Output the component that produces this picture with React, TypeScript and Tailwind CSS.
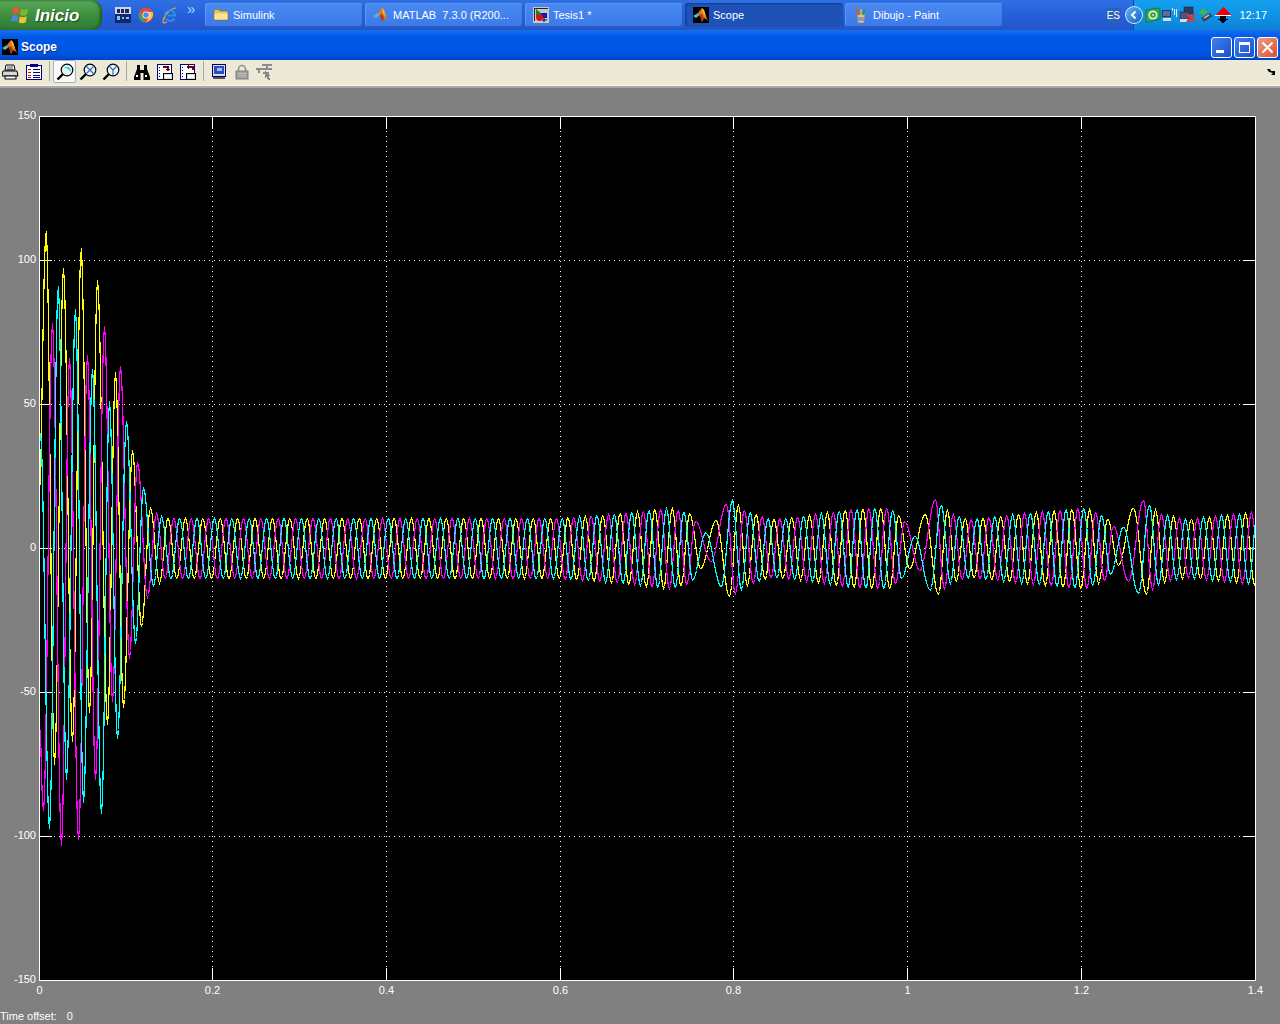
import React from "react";

type Pt = [number, number];

const lerpTable = (table: Pt[], x: number) => {
  if (x <= table[0][0]) return table[0][1];
  for (let i = 1; i < table.length; i++) {
    if (x <= table[i][0]) {
      const [a, b] = [table[i - 1], table[i]];
      return a[1] + ((b[1] - a[1]) * (x - a[0])) / (b[0] - a[0]);
    }
  }
  return table[table.length - 1][1];
};

const ENV: Pt[] = [
  [150, 11], [165, 10.5], [560, 10.5], [620, 12], [670, 14], [690, 12], [700, 7], [710, 4], [718, 12], [730, 17],
  [745, 13], [770, 10], [800, 11], [850, 13.5], [890, 14], [905, 9], [915, 4], [925, 12], [935, 17], [950, 12],
  [970, 10], [1020, 12], [1085, 14], [1105, 11], [1120, 5], [1130, 13], [1142, 17], [1160, 12], [1185, 10], [1255, 12.5],
];

const PHASE: Pt[] = [
  [156, 0], [695, 31], [726, 32], [904, 42], [935, 43], [1113, 53], [1143, 54], [1251, 60], [1300, 62.7],
];

const invPhase = (p: number) => {
  for (let i = 1; i < PHASE.length; i++) {
    if (p <= PHASE[i][1]) {
      const [a, b] = [PHASE[i - 1], PHASE[i]];
      return a[0] + ((b[0] - a[0]) * (p - a[1])) / (b[1] - a[1]);
    }
  }
  return 1300;
};

const buildExtremes = (start: Pt[], offset: number): Pt[] => {
  const out: Pt[] = [...start];
  const lastX = start[start.length - 1][0];
  const lastPositive = start[start.length - 1][1] > 0;
  let k = Math.ceil(((lastX - 156) / 17.4 + offset) * 2) / 2 - 1;
  let wantPositive = !lastPositive;
  for (; k < 66; k += 0.5) {
    const isPeak = Number.isInteger(k);
    if (isPeak !== wantPositive) continue;
    const x = invPhase(k - offset);
    if (x <= out[out.length - 1][0] + 4) continue;
    if (x > 1290) break;
    const a = lerpTable(ENV, x);
    out.push([x, isPeak ? a : -a]);
    wantPositive = !wantPositive;
  }
  return out;
};

const YELLOW_START: Pt[] = [
  [37, -10], [45.7, 110], [54, -75], [63, 97], [72, -67], [80.7, 104], [89, -57], [97, 93], [107, -61], [115, 61],
  [123, -55], [132, 34], [141, -27], [150, 14], [159, -12],
];
const MAGENTA_START: Pt[] = [
  [34, 20], [43, -91], [52, 78], [61, -103], [69, 66], [78, -101], [87, 67], [95, -80], [104, 77], [112, -53],
  [120, 63], [129, -38], [137, 30], [147, -17], [156, 12],
];
const CYAN_START: Pt[] = [
  [40, 40], [49, -97], [57.7, 91], [66, -80], [75, 83], [83, -88], [92, 62], [101, -92], [109, 51], [117, -66],
  [126, 44], [135, -33], [143, 21], [153, -13], [161, 11],
];

const Y0 = 548;
const SCALE = 2.883;

const valueAt = (ext: Pt[], x: number) => {
  let lo = 0;
  let hi = ext.length - 1;
  while (hi - lo > 1) {
    const m = (lo + hi) >> 1;
    if (x > ext[m][0]) lo = m;
    else hi = m;
  }
  const [a, b] = [ext[lo], ext[hi]];
  const t = Math.min(1, Math.max(0, (x - a[0]) / (b[0] - a[0])));
  return a[1] + ((b[1] - a[1]) * (1 - Math.cos(Math.PI * t))) / 2;
};

const tracePoints = (ext: Pt[]) => {
  const pts: string[] = [];
  for (let x = 40; x <= 1255; x += 1) {
    const near = ext.find((e) => Math.abs(e[0] - x) <= 0.5);
    const sx = near ? near[0] : x;
    pts.push(`${x}.5,${Math.round(Y0 - valueAt(ext, sx) * SCALE)}.5`);
  }
  return pts.join(" ");
};

const YELLOW = tracePoints(buildExtremes(YELLOW_START, 1 / 3));
const MAGENTA = tracePoints(buildExtremes(MAGENTA_START, 0));
const CYAN = tracePoints(buildExtremes(CYAN_START, -1 / 3));

const XTICKS: [number, string][] = [
  [39.5, "0"], [212.5, "0.2"], [386.5, "0.4"], [560.5, "0.6"], [733.5, "0.8"], [907.5, "1"], [1081.5, "1.2"], [1255.5, "1.4"],
];
const YTICKS: [number, string][] = [
  [116.5, "150"], [260.5, "100"], [404.5, "50"], [548.5, "0"], [692.5, "-50"], [836.5, "-100"], [980.5, "-150"],
];

function MatlabLogo({ s = 16 }: { s?: number }) {
  return (
    <svg width={s} height={s} viewBox="0 0 16 16" className="shrink-0">
      <path d="M0 9 5 6 7 8 3 11Z" fill="#5ab4c4" />
      <path d="M5 6 9 1 11 3 14 12 16 14 11 11 9 15 7 8Z" fill="#e8761a" />
      <path d="M9 1 11 3 13 10 10 6Z" fill="#f6b73c" />
      <path d="M7 8 9 15 11 11 9 7Z" fill="#b23a10" />
    </svg>
  );
}

function MatlabBlack() {
  return (
    <span className="inline-flex bg-black shrink-0">
      <MatlabLogo s={16} />
    </span>
  );
}

function FolderIcon() {
  return (
    <svg width={16} height={16} viewBox="0 0 16 16" className="shrink-0">
      <path d="M1 4 2 2.5H6L7 4H14L15 5V13H1Z" fill="#e9c25c" stroke="#8d6f2a" strokeWidth="0.7" />
      <path d="M1.5 6.5H14.5V12.5H1.5Z" fill="#fbe595" />
    </svg>
  );
}

function TesisIcon() {
  return (
    <svg width={16} height={16} viewBox="0 0 16 16" className="shrink-0">
      <rect x="0" y="0" width="16" height="16" fill="#c8c8c8" />
      <rect x="1" y="1" width="14" height="1" fill="#222" />
      <rect x="1" y="1" width="1" height="13" fill="#222" />
      <path d="M3 2 9 7 3 10Z" fill="#0a8a2a" />
      <rect x="8" y="6" width="6" height="5" fill="#1414c8" />
      <circle cx="6.5" cy="10.5" r="3.4" fill="#e01010" />
      <path d="M11 11V15M9 13H14" stroke="#111" strokeWidth="1" />
    </svg>
  );
}

function PaintIcon() {
  return (
    <svg width={16} height={18} viewBox="0 0 16 18" className="shrink-0">
      <path d="M4 8H12L11 17H5Z" fill="#c9c6b6" stroke="#7a7a68" strokeWidth="0.6" />
      <path d="M6 9 3 2" stroke="#d3611b" strokeWidth="2" />
      <path d="M8 9V3" stroke="#e7b632" strokeWidth="1.6" />
      <path d="M10 9 12 3" stroke="#2d9b3e" strokeWidth="1.6" />
      <path d="M6 11V15M8 11V15" stroke="#3a6fd0" strokeWidth="1" />
      <path d="M10 11V15" stroke="#d8453a" strokeWidth="1" />
    </svg>
  );
}

function WinFlag() {
  return (
    <svg width={20} height={20} viewBox="0 0 20 20" className="shrink-0">
      <path d="M3 3.5C5.5 2 7 2.5 9.5 3.5L8.5 9.5C6 8.5 4.5 8 2 9.5Z" fill="#e8562a" />
      <path d="M11 4C13 5 15 5 18 3.8L17 9.8C14 11 12.5 11 10 10Z" fill="#7ab92e" />
      <path d="M2 11C4.5 9.6 6 10 8.2 11L7.2 17C5 16 3.5 15.6 1 17Z" fill="#4d86d8" />
      <path d="M9.7 11.5C12 12.5 14 12.5 16.7 11.3L15.8 17.3C13 18.5 11 18.3 8.8 17.4Z" fill="#f2c230" />
    </svg>
  );
}

function DevIcon() {
  return (
    <svg width={16} height={16} viewBox="0 0 16 16" shapeRendering="crispEdges" className="shrink-0">
      <rect width="16" height="16" fill="#0d2a6b" />
      <rect x="0" y="0" width="16" height="7" fill="#cfd6e6" />
      <rect x="2" y="2" width="3" height="4" fill="#1b2a55" />
      <rect x="6" y="2" width="3" height="4" fill="#1b2a55" />
      <rect x="10" y="2" width="4" height="4" fill="#1b2a55" />
      <rect x="2" y="9" width="3" height="4" fill="#8fc0f0" />
      <rect x="7" y="10" width="2" height="2" fill="#8fc0f0" />
      <rect x="11" y="10" width="3" height="2" fill="#8fc0f0" />
    </svg>
  );
}

function ChromeIcon() {
  return (
    <svg width={16} height={16} viewBox="0 0 16 16" className="shrink-0">
      <circle cx="8" cy="8" r="7.5" fill="#dd4b3b" />
      <path d="M1.5 4.5 5 11 8 15.5C3 15.5 .5 11.5 .5 8 .5 6.5 1 5.5 1.5 4.5Z" fill="#3aa757" />
      <path d="M8 5H14.7C15.5 8 15 12.5 8 15.5L11 10Z" fill="#fcc934" />
      <circle cx="8" cy="8" r="3.6" fill="#fff" />
      <circle cx="8" cy="8" r="2.8" fill="#4a8af4" />
    </svg>
  );
}

function IEIcon() {
  return (
    <svg width={17} height={17} viewBox="0 0 17 17" className="shrink-0">
      <path d="M15 1C11 1 4 6 2 14 1.5 16 3 16.5 6 15" fill="none" stroke="#e8a72c" strokeWidth="1.2" />
      <path d="M4 8.5A5 5 0 0 1 14 8.5H7M13.5 11.5A5 5 0 0 1 5 11.5" fill="none" stroke="#2f8fe8" strokeWidth="2.2" />
    </svg>
  );
}

function TaskButton({ icon, label, active }: { icon: React.ReactNode; label: string; active?: boolean }) {
  return (
    <div
      className={`w-[158px] h-[24px] flex items-center gap-[3px] rounded-[3px] pl-[8px] text-[11px] text-white whitespace-pre overflow-hidden shrink-0 ${
        active
          ? "bg-[#1e52b7] shadow-[inset_1px_1px_2px_#123c8e]"
          : "bg-gradient-to-b from-[#4a8af2] to-[#3a79e8] shadow-[inset_-1px_-1px_1px_#2a5bc4,inset_1px_1px_1px_#5d97f4]"
      }`}
    >
      {icon}
      <span className="ml-[1px]">{label}</span>
    </div>
  );
}

function TrayIcons() {
  return (
    <div className="flex items-center gap-[1px]">
      <svg width={16} height={16} viewBox="0 0 16 16">
        <path d="M1 3 13 1 15 2V12L3 15H1Z" fill="#2fa84a" stroke="#0d6b2c" strokeWidth="0.7" />
        <circle cx="8" cy="8" r="4.6" fill="#d8f0c8" />
        <circle cx="8" cy="8" r="2.8" fill="#3d9b46" />
        <circle cx="8" cy="8" r="1" fill="#cfe8b8" />
      </svg>
      <svg width={16} height={16} viewBox="0 0 16 16" shapeRendering="crispEdges">
        <rect x="0" y="3" width="9" height="7" fill="#2b3a66" />
        <rect x="1" y="4" width="7" height="5" fill="#5a6f9e" />
        <rect x="1" y="11" width="8" height="3" fill="#d6dce8" />
        <rect x="10" y="1" width="1" height="3" fill="#e6ecf6" />
        <rect x="12" y="2" width="1" height="6" fill="#e6ecf6" />
        <rect x="14" y="2" width="1" height="8" fill="#e6ecf6" />
      </svg>
      <svg width={18} height={18} viewBox="0 0 18 18">
        <rect x="5" y="1" width="9" height="7" fill="#2e3c63" stroke="#1c2645" strokeWidth="0.6" />
        <rect x="1" y="6" width="9" height="7" fill="#47577f" stroke="#1c2645" strokeWidth="0.6" />
        <rect x="1" y="13" width="8" height="3" fill="#d9dde6" />
        <path d="M8 8 16 16M16 8 8 16" stroke="#e5322b" strokeWidth="2.4" />
      </svg>
      <svg width={16} height={16} viewBox="0 0 16 16">
        <path d="M1 5 6 1V3.5H9V6.5H6V9Z" fill="#4fb82c" />
        <path d="M3 11 12 6 15 9 6 15Z" fill="#3f4a52" />
        <path d="M6 11 11 8" stroke="#c8ced4" strokeWidth="1.4" />
      </svg>
      <svg width={16} height={16} viewBox="0 0 16 16" shapeRendering="crispEdges">
        <path d="M8 0 16 8H0Z" fill="#f00000" />
        <rect x="0" y="8" width="16" height="1" fill="#fff" />
        <path d="M5 9H11V12H13.5L8 16 2.5 12H5Z" fill="#000" />
      </svg>
    </div>
  );
}

function Printer() {
  return (
    <svg width={17} height={16} viewBox="0 0 17 16">
      <path d="M4 1H12L13 6H3Z" fill="#fff" stroke="#000" />
      <path d="M1 7H15L16 12H0Z" fill="#d8d8d8" stroke="#000" />
      <rect x="3" y="12" width="11" height="3" fill="#fff" stroke="#000" />
      <path d="M5 3H11M5 5H11" stroke="#000" strokeWidth="0.7" />
    </svg>
  );
}

function ParamsIcon() {
  return (
    <svg width={16} height={16} viewBox="0 0 16 16" shapeRendering="crispEdges">
      <rect x="0.5" y="1.5" width="15" height="14" fill="#fff" stroke="#000080" />
      <rect x="4" y="0" width="8" height="3" fill="#000080" />
      <path d="M2 5H5M2 8H5M2 11H5M2 13.5H5" stroke="#c01010" />
      <path d="M7 5H14M7 8H14M7 11H14M7 13.5H14" stroke="#000080" />
    </svg>
  );
}

function Magnifier({ kind }: { kind: "plain" | "x" | "y" }) {
  return (
    <svg width={18} height={18} viewBox="0 0 18 18">
      <circle cx="11" cy="7" r="5.8" fill="#eaf6f8" stroke="#000" strokeWidth="1.2" />
      {kind === "plain" && <path d="M8 5A4 4 0 0 1 14 5 4 4 0 0 1 15 9C12 6 10 5 8 5Z" fill="#3fd9e6" />}
      {kind === "x" && <path d="M7.5 3.5 14.5 10.5M14.5 3.5 7.5 10.5" stroke="#2a62c8" strokeWidth="1.1" />}
      {kind === "y" && <path d="M7.5 3.5 11 7 14.5 3.5M11 7V12" stroke="#2a62c8" strokeWidth="1.1" fill="none" />}
      <path d="M7 11 1.5 16.5" stroke="#000" strokeWidth="2.4" />
    </svg>
  );
}

function Binoculars() {
  return (
    <svg width={16} height={16} viewBox="0 0 16 16">
      <path d="M3 1H6V6H10V1H13V5L16 13V16H9.5V9H6.5V16H0V13L3 5Z" fill="#000" />
      <rect x="2" y="11" width="2" height="2" fill="#fff" />
      <rect x="11" y="11" width="2" height="2" fill="#fff" />
    </svg>
  );
}

function SaveAxes({ back }: { back?: boolean }) {
  return (
    <svg width={16} height={16} viewBox="0 0 16 16" shapeRendering="crispEdges">
      <rect x="0.5" y="0.5" width="14" height="15" fill="#fff" stroke="#000080" />
      <path d="M2 3H3M2 6H3M2 9H3M2 12H3" stroke="#000080" />
      <path d={back ? "M13 6V3H7M9 1 7 3 9 5" : "M6 3H11V7M9 5 11 7 13 5"} stroke="#800000" strokeWidth="1.2" fill="none" />
      <rect x="6.5" y="9.5" width="9" height="6" fill="#d8d8d8" stroke="#000" />
      <rect x="8" y="11" width="6" height="3" fill="#fff" />
    </svg>
  );
}

function ScopeProps() {
  return (
    <svg width={14} height={16} viewBox="0 0 14 16" shapeRendering="crispEdges">
      <rect x="0.5" y="0.5" width="13" height="12" fill="#d8dce8" stroke="#000060" />
      <rect x="2" y="2" width="10" height="8" fill="#2b4fc0" />
      <rect x="5" y="4" width="5" height="3" fill="#a8bce8" />
      <rect x="1" y="13" width="12" height="2" fill="#555" />
    </svg>
  );
}

function LockIcon() {
  return (
    <svg width={14} height={16} viewBox="0 0 14 16">
      <path d="M3.5 8V5A3.5 3.5 0 0 1 10.5 5V8" fill="none" stroke="#909090" strokeWidth="1.6" />
      <rect x="1" y="7" width="12" height="8" fill="#a0a0a0" stroke="#808080" />
      <path d="M3 9.5H11M3 12H11" stroke="#c4c4c4" />
    </svg>
  );
}

function SelectIcon() {
  return (
    <svg width={17} height={16} viewBox="0 0 17 16" shapeRendering="crispEdges">
      <path d="M0 5H9M3 5V9M6 1H16M11 1V5M9 5H16M7 9H13" stroke="#8c8c8c" strokeWidth="1.6" />
      <path d="M9 7 15 12H12.5L14 15.5H12L10.5 13 9 15Z" fill="#888" />
    </svg>
  );
}

function ToolBtn({ children, active }: { children: React.ReactNode; active?: boolean }) {
  return (
    <div
      className={`w-[23px] h-[23px] flex items-center justify-center shrink-0 rounded-[2px] ${
        active ? "bg-[#fbfaf6] border border-[#9db3cc]" : ""
      }`}
    >
      {children}
    </div>
  );
}

function Sep() {
  return (
    <div className="w-[8px] h-[23px] flex justify-center shrink-0">
      <div className="w-[1px] h-[20px] mt-[1px] bg-[#aca899]" />
    </div>
  );
}

function WinBtn({ children, red }: { children: React.ReactNode; red?: boolean }) {
  return (
    <div
      className={`w-[21px] h-[21px] rounded-[3px] border border-white flex items-center justify-center ${
        red
          ? "bg-gradient-to-br from-[#f09a82] to-[#d8502e]"
          : "bg-gradient-to-br from-[#3f80f0] to-[#1c50cc]"
      }`}
    >
      {children}
    </div>
  );
}

export default function App() {
  return (
    <div
      className="w-[1280px] h-[1024px] overflow-hidden flex flex-col bg-[#808080]"
      style={{ fontFamily: '"Liberation Sans", Arial, sans-serif' }}
    >
      {/* taskbar */}
      <div className="h-[30px] shrink-0 flex items-center bg-gradient-to-b from-[#2f6fe4] via-[#2560dc] to-[#2455c8] relative">
        <div className="w-[102px] h-[30px] shrink-0 flex items-center pl-[10px] gap-[5px] rounded-r-[10px] bg-gradient-to-b from-[#5aa85a] via-[#3d8f3d] to-[#2f7a34] shadow-[inset_-2px_0_3px_#1d5a20]">
          <WinFlag />
          <span className="text-[17px] italic font-bold text-white leading-none [text-shadow:1px_1px_1px_#1a4a1a]">
            Inicio
          </span>
        </div>
        <div className="w-[103px] shrink-0 h-full flex items-center pl-[13px] gap-[7px] relative">
          <DevIcon />
          <ChromeIcon />
          <IEIcon />
          <span className="text-[15px] leading-none text-[#b9d2f8] self-start mt-[1px] ml-[2px]">»</span>
        </div>
        <div className="flex gap-[2px] items-center">
          <TaskButton icon={<FolderIcon />} label="Simulink" />
          <TaskButton icon={<MatlabLogo />} label="MATLAB  7.3.0 (R200..." />
          <TaskButton icon={<TesisIcon />} label="Tesis1 *" />
          <TaskButton icon={<MatlabBlack />} label="Scope" active />
          <TaskButton icon={<PaintIcon />} label="Dibujo - Paint" />
        </div>
        <div className="flex-1" />
        <span className="text-[10px] text-white bg-[#2a62b8] px-[1px] h-[15px] leading-[15px] mr-[12px]">ES</span>
        <div className="w-[147px] h-[30px] shrink-0 flex items-center bg-gradient-to-b from-[#14a0ee] via-[#0f94e6] to-[#0c82d8] border-l border-[#0a4aa0] relative pl-[9px]">
          <div className="absolute left-[-9px] top-[6px] w-[18px] h-[18px] rounded-full bg-gradient-to-br from-[#58b6f2] to-[#1260c8] border border-white/80 flex items-center justify-center">
            <svg width={10} height={10} viewBox="0 0 10 10">
              <path d="M6.5 1.5 3 5 6.5 8.5" fill="none" stroke="#fff" strokeWidth="2" />
            </svg>
          </div>
          <div className="ml-[2px]">
            <TrayIcons />
          </div>
          <span className="text-[11px] text-white ml-auto mr-[13px]">12:17</span>
        </div>
      </div>

      {/* title bar */}
      <div className="h-[30px] shrink-0 flex items-center pt-[4px] bg-[linear-gradient(180deg,#1a6fe8_0%,#0a66f0_10%,#0058e8_25%,#0056e4_75%,#0048cc_95%,#0040b8_100%)] pl-[2px] pr-[2px]">
        <MatlabBlack />
        <span className="text-[12px] font-bold text-white ml-[3px] [text-shadow:1px_1px_0_#0a2f90]">Scope</span>
        <div className="ml-auto flex gap-[2px]">
          <WinBtn>
            <div className="w-[8px] h-[3px] bg-white mt-[8px] mr-[4px]" />
          </WinBtn>
          <WinBtn>
            <div className="w-[11px] h-[11px] border border-white border-t-[3px]" />
          </WinBtn>
          <WinBtn red>
            <svg width={13} height={13} viewBox="0 0 13 13">
              <path d="M1.5 1.5 11.5 11.5M11.5 1.5 1.5 11.5" stroke="#fff" strokeWidth="2" />
            </svg>
          </WinBtn>
        </div>
      </div>

      {/* toolbar */}
      <div className="h-[25px] shrink-0 flex items-start bg-[#ece9d8] border-b border-[#f6f4ea] box-content -ml-[1px]">
        <ToolBtn><Printer /></ToolBtn>
        <ToolBtn><ParamsIcon /></ToolBtn>
        <Sep />
        <ToolBtn active><Magnifier kind="plain" /></ToolBtn>
        <ToolBtn><Magnifier kind="x" /></ToolBtn>
        <ToolBtn><Magnifier kind="y" /></ToolBtn>
        <Sep />
        <ToolBtn><Binoculars /></ToolBtn>
        <ToolBtn><SaveAxes /></ToolBtn>
        <ToolBtn><SaveAxes back /></ToolBtn>
        <Sep />
        <ToolBtn><ScopeProps /></ToolBtn>
        <ToolBtn><LockIcon /></ToolBtn>
        <ToolBtn><SelectIcon /></ToolBtn>
        <svg width={9} height={8} viewBox="0 0 9 8" className="ml-auto mr-[4px] mt-[8px]">
          <path d="M0 1 3 1 4 3 8 3 8 7 4 7 6 5 2 4Z" fill="#000" />
        </svg>
      </div>
      <div className="h-[2px] shrink-0 bg-[#a8a8a8]" />

      {/* plot */}
      <svg
        width={1280}
        height={918}
        viewBox="0 88 1280 918"
        className="block shrink-0"
        style={{ fontFamily: '"Liberation Sans", Arial, sans-serif', fontSize: 11 }}
      >
        <rect x="39.5" y="116.5" width="1216" height="864" fill="#000" />
        {XTICKS.slice(1, -1).map(([x]) => (
          <path key={x} d={`M${x} 116V980`} stroke="#fff" strokeDasharray="1 4" shapeRendering="crispEdges" />
        ))}
        {YTICKS.slice(1, -1).map(([y]) => (
          <path key={y} d={`M39 ${y}H1255`} stroke="#fff" strokeDasharray="1 4" shapeRendering="crispEdges" />
        ))}
        {XTICKS.slice(1, -1).map(([x]) => (
          <path key={`t${x}`} d={`M${x} 117V129M${x} 968V980`} stroke="#fff" shapeRendering="crispEdges" />
        ))}
        {YTICKS.slice(1, -1).map(([y]) => (
          <path key={`t${y}`} d={`M40 ${y}H52M1243 ${y}H1255`} stroke="#fff" shapeRendering="crispEdges" />
        ))}
        <polyline points={YELLOW} fill="none" stroke="#ffff00" strokeWidth="1.2" shapeRendering="crispEdges" />
        <polyline points={MAGENTA} fill="none" stroke="#ff00ff" strokeWidth="1.2" shapeRendering="crispEdges" />
        <polyline points={CYAN} fill="none" stroke="#00ffff" strokeWidth="1.2" shapeRendering="crispEdges" />
        <rect x="39.5" y="116.5" width="1216" height="864" fill="none" stroke="#fff" shapeRendering="crispEdges" />
        {XTICKS.map(([x, l]) => (
          <text key={l} x={x} y={994} textAnchor="middle" fill="#fff">{l}</text>
        ))}
        {YTICKS.map(([y, l]) => (
          <text key={l} x={36} y={y + 2.5} textAnchor="end" fill="#fff">{l}</text>
        ))}
      </svg>

      {/* status */}
      <div className="flex-1 flex items-center pt-[2px] text-[11px] text-white whitespace-pre">
        <span>Time offset:</span>
        <span className="ml-[10px]">0</span>
      </div>
    </div>
  );
}
